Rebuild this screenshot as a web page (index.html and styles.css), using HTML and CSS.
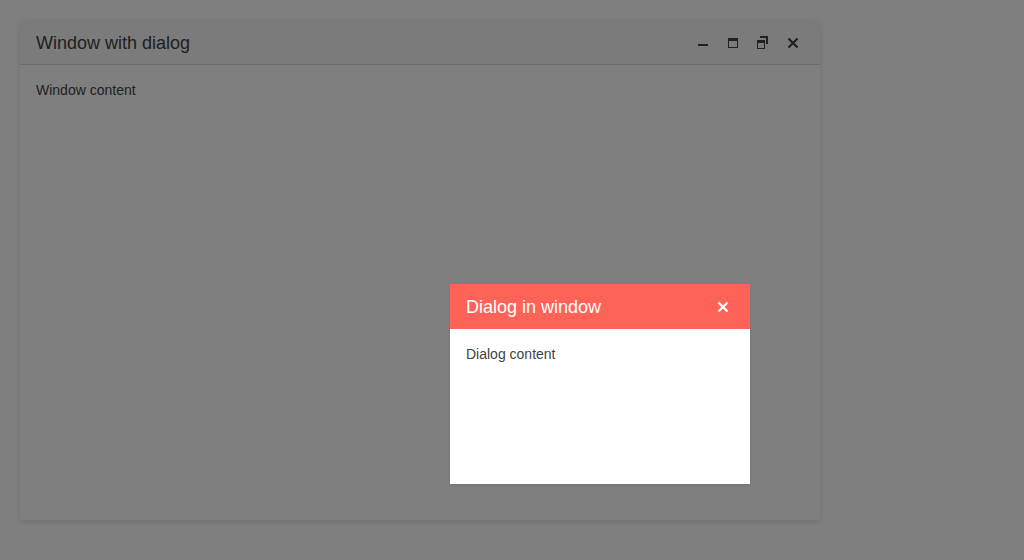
FILE: index.html
```html
<!DOCTYPE html>
<html>
<head>
<meta charset="utf-8">
<link rel="stylesheet" href="styles.css">
</head>
<body>
<div class="window">
  <div class="titlebar">
    <span class="title">Window with dialog</span>
    <div class="actions">
      <span class="action"><svg width="16" height="16" viewBox="0 0 16 16"><rect x="3" y="9" width="10" height="2" fill="#424242"/></svg></span>
      <span class="action"><svg width="16" height="16" viewBox="0 0 16 16"><path d="M3 3h10v10H3z M4 6v6h8V6z" fill="#424242" fill-rule="evenodd"/></svg></span>
      <span class="action"><svg width="16" height="16" viewBox="0 0 16 16"><path d="M5 1h8v8h-2V3H5z" fill="#424242"/><path d="M2 5h8v9H2z M3 8v5h6V8z" fill="#424242" fill-rule="evenodd"/></svg></span>
      <span class="action"><svg width="16" height="16" viewBox="0 0 16 16"><path d="M3.5 3.5l9 9M12.5 3.5l-9 9" stroke="#424242" stroke-width="2.2"/></svg></span>
    </div>
  </div>
  <div class="content">Window content</div>
</div>
<div class="overlay"></div>
<div class="dialog">
  <div class="dialog-title">
    <span class="title">Dialog in window</span>
    <span class="dialog-close"><svg width="16" height="16" viewBox="0 0 16 16"><path d="M3.5 3.5l9 9M12.5 3.5l-9 9" stroke="#ffffff" stroke-width="2.2"/></svg></span>
  </div>
  <div class="dialog-content">Dialog content</div>
</div>
</body>
</html>
```
FILE: styles.css
```css
html, body {
  margin: 0;
  padding: 0;
  background: #ffffff;
  width: 1024px;
  height: 560px;
  overflow: hidden;
  font-family: "Liberation Sans", Arial, sans-serif;
  color: #424242;
}
.window {
  margin: 20px 0 0 20px;
  width: 800px;
  height: 500px;
  background: #ffffff;
  box-shadow: 0 2px 6px rgba(0,0,0,0.12);
  display: flex;
  flex-direction: column;
}
.titlebar {
  height: 44px;
  border-bottom: 1px solid rgba(0,0,0,0.12);
  background: #f6f6f6;
  display: flex;
  align-items: center;
  justify-content: space-between;
  padding: 0 16px;
}
.title {
  font-size: 18px;
  line-height: 24px;
  padding-top: 1px;
}
.actions {
  display: flex;
  gap: 14px;
  margin-right: 3px;
  padding-top: 1px;
}
.action {
  width: 16px;
  height: 16px;
  display: flex;
}
.content {
  padding: 17px 16px 16px;
  font-size: 14px;
  line-height: 17px;
}
.overlay {
  position: absolute;
  left: 0;
  top: 0;
  width: 1024px;
  height: 560px;
  background: rgba(0,0,0,0.5);
}
.dialog {
  position: absolute;
  left: 450px;
  top: 284px;
  width: 300px;
  height: 200px;
  background: #ffffff;
  box-shadow: 0 1px 3px rgba(0,0,0,0.1);
  display: flex;
  flex-direction: column;
}
.dialog-title {
  height: 45px;
  background: #ff6358;
  color: #ffffff;
  display: flex;
  align-items: center;
  justify-content: space-between;
  padding: 0 19px 0 16px;
}
.dialog-close {
  width: 16px;
  height: 16px;
  display: flex;
}
.dialog-content {
  padding: 17px 16px 16px;
  font-size: 14px;
  line-height: 17px;
}
```
